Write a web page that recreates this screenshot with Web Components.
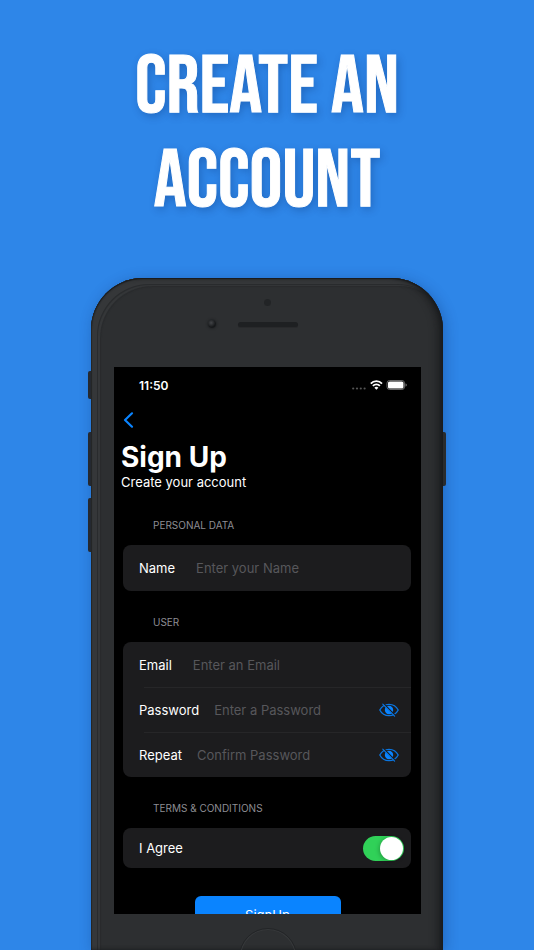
<!DOCTYPE html>
<html lang="en">
<head>
<meta charset="utf-8">
<meta name="viewport" content="width=device-width, initial-scale=1">
<title>Create an account</title>
<style>
  html, body {
    height: 100%;
    margin: 0;
  }
  body {
    background: #2e86e8;
    font-family: Inter, "Liberation Sans", sans-serif;
    color: #fff;
  }
</style>
</head>
<body>
<promo-page>
  <promo-title slot="title">Create an<br>account</promo-title>
  <phone-frame>
    <status-bar time="11:50"></status-bar>
    <page-header heading="Sign Up" subtitle="Create your account"></page-header>
    <form-section heading="Personal data">
      <form-field label="Name" placeholder="Enter your Name"></form-field>
    </form-section>
    <form-section heading="User">
      <form-field label="Email" type="email" placeholder="Enter an Email"></form-field>
      <form-field label="Password" type="password" placeholder="Enter a Password"></form-field>
      <form-field label="Repeat" type="password" placeholder="Confirm Password"></form-field>
    </form-section>
    <form-section heading="Terms &amp; Conditions">
      <toggle-field label="I Agree"></toggle-field>
    </form-section>
    <submit-button>SignUp</submit-button>
  </phone-frame>
</promo-page>

<script>
class BaseElement extends HTMLElement {
  constructor() {
    super();
    const template = document.createElement('template');
    template.innerHTML = this.render();
    this.attachShadow({mode: 'open'});
    this.shadowRoot.appendChild(template.content.cloneNode(true));
  }
}

class PromoPage extends BaseElement {
  render() {
    return `
      <style>
        :host {
          display: flex;
          flex-direction: column;
          height: 100vh;
          overflow: hidden;
        }
        header {
          flex: none;
          padding: 41px 16px 49px;
        }
        main {
          display: flex;
          flex: 1;
          min-height: 0;
          padding: 0 88px;
        }
      </style>
      <header><slot name="title"></slot></header>
      <main><slot></slot></main>
    `;
  }
}

class PromoTitle extends BaseElement {
  render() {
    return `
      <style>
        :host { display: block; }
        h1 {
          margin: 0;
          font: 82px/94px "Bebas Neue", "Liberation Sans Narrow", "Liberation Sans", sans-serif;
          text-align: center;
          text-transform: uppercase;
          text-shadow: 2px 3px 8px rgba(0, 30, 90, 0.3);
          -webkit-text-stroke: 1px #fff;
        }
      </style>
      <h1><slot></slot></h1>
    `;
  }
}

class PhoneFrame extends BaseElement {
  render() {
    return `
      <style>
        :host {
          display: flex;
          flex: 1;
          min-width: 0;
        }
        .keys {
          display: flex;
          flex-direction: column;
          gap: 12px;
          width: 3px;
          padding-top: 93px;
        }
        .keys i {
          height: 54px;
          background: #292b2d;
          border-radius: 2px 0 0 2px;
        }
        .keys .mute {
          height: 28px;
          margin-bottom: 21px;
        }
        .keys.right { padding-top: 154px; }
        .keys.right i { border-radius: 0 2px 2px 0; }
        .body {
          display: flex;
          flex-direction: column;
          flex: 1;
          min-width: 0;
          box-sizing: border-box;
          padding: 0 22px 0 23px;
          border-radius: 52px 52px 0 0;
          background: #2d2f31;
          box-shadow:
            inset 0 1px 1px #191b1d,
            inset -4px 0 4px #1b1d1f,
            inset 1px 0 1px #26282a,
            inset 6px 6px 0 #353739,
            inset 7px 7px 1px #292b2d,
            inset 9px 8px 1px #37393b,
            inset 10px 9px 1px #292b2d,
            inset -10px 0 4px #292b2d,
            2px 2px 14px rgba(0, 30, 90, 0.3);
        }
        .top {
          display: grid;
          grid-template-columns: 1fr 60px 1fr;
          align-content: start;
          align-items: center;
          justify-items: center;
          row-gap: 14px;
          box-sizing: border-box;
          flex: none;
          height: 89px;
          padding-top: 21px;
        }
        .sensor {
          grid-column: 2;
          width: 7px;
          height: 7px;
          border-radius: 50%;
          background: #222426;
        }
        .lens {
          grid-column: 1;
          justify-self: end;
          width: 8px;
          height: 8px;
          margin-right: 22px;
          border-radius: 50%;
          background: radial-gradient(circle at 40% 35%, #424447 0, #17191b 60%);
          box-shadow: 0 0 2px 1px #222426;
        }
        .speaker {
          width: 60px;
          height: 5px;
          border-radius: 3px;
          background: #1e2022;
          box-shadow: 0 1px 0 #28292b;
        }
        .screen {
          flex: 1;
          min-height: 0;
          overflow: hidden;
          background: #000;
        }
        .bottom {
          display: flex;
          justify-content: center;
          flex: none;
          box-sizing: border-box;
          height: 36px;
          padding-top: 14px;
          overflow: hidden;
        }
        .home {
          box-sizing: border-box;
          flex: none;
          width: 58px;
          height: 58px;
          border: 1px solid #232527;
          border-radius: 50%;
          box-shadow: inset 0 0 0 1px #37393b;
        }
      </style>
      <div class="keys"><i class="mute"></i><i></i><i></i></div>
      <div class="body">
        <div class="top">
          <div class="sensor"></div>
          <div class="lens"></div>
          <div class="speaker"></div>
        </div>
        <div class="screen"><slot></slot></div>
        <div class="bottom"><div class="home"></div></div>
      </div>
      <div class="keys right"><i></i></div>
    `;
  }
}

class StatusBar extends BaseElement {
  render() {
    return `
      <style>
        :host {
          display: flex;
          align-items: center;
          justify-content: space-between;
          height: 36px;
          padding: 0 14px 0 25px;
          font-size: 12px;
          font-weight: 600;
        }
        svg { display: block; }
      </style>
      <time>${this.getAttribute('time')}</time>
      <svg width="56" height="12" viewBox="0 0 56 12" fill="none">
        <g fill="#555">
          <circle cx="2.200" cy="9.5" r="1.1"/><circle cx="6" cy="9.5" r="1.1"/>
          <circle cx="9.8" cy="9.5" r="1.1"/><circle cx="13.6" cy="9.5" r="1.1"/>
        </g>
        <g stroke="#fff" stroke-width="1.8">
          <path d="M19.8 4.6a7.6 7.6 0 0 1 11.2 0"/>
          <path d="M21.9 6.9a4.7 4.7 0 0 1 7 0"/>
        </g>
        <path d="M25.4 10.8l-2-2.1a2.8 2.8 0 0 1 4 0z" fill="#fff"/>
        <rect x="36" y="1.5" width="17.500" height="9" rx="2.6" stroke="#666"/>
        <rect x="37" y="2.5" width="15.500" height="7" rx="1.6" fill="#fff"/>
        <path d="M54.500 4.300v3.400q1.300-.5 1.300-1.700t-1.300-1.700z" fill="#777"/>
      </svg>
    `;
  }
}

class PageHeader extends BaseElement {
  render() {
    return `
      <style>
        :host {
          display: block;
          padding: 8px 7px 4px;
        }
        button {
          display: block;
          margin: 0 0 10px;
          padding: 0 2px;
          border: 0;
          background: none;
        }
        svg { display: block; }
        h2 {
          margin: 0;
          font-size: 28px;
          font-weight: 700;
          line-height: 36px;
        }
        p {
          margin: 0;
          font-size: 13px;
          line-height: 15px;
        }
      </style>
      <button type="button" aria-label="Back">
        <svg width="11" height="18" viewBox="0 0 11 18" fill="none" stroke="#0a84ff" stroke-width="2.200" stroke-linecap="round" stroke-linejoin="round">
          <path d="M9 2.300L2 9l7 6.700"/>
        </svg>
      </button>
      <h2>${this.getAttribute('heading')}</h2>
      <p>${this.getAttribute('subtitle')}</p>
    `;
  }
}

class FormSection extends BaseElement {
  render() {
    return `
      <style>
        :host {
          display: block;
          padding: 23px 10px 0 9px;
        }
        h3 {
          margin: 0 0 12px;
          padding-left: 30px;
          font-size: 10px;
          font-weight: 400;
          line-height: 16px;
          color: #8d8d93;
          text-transform: uppercase;
        }
        .card {
          border-radius: 8px;
          background: #1c1c1e;
        }
      </style>
      <h3>${this.getAttribute('heading')}</h3>
      <div class="card"><slot></slot></div>
    `;
  }
}

class FormField extends BaseElement {
  render() {
    const type = this.getAttribute('type') || 'text';
    const secret = type === 'password';
    return `
      <style>
        :host {
          display: block;
          padding-left: 16px;
          font-size: 13px;
        }
        .row {
          display: flex;
          align-items: center;
          gap: ${secret ? 15 : 21}px;
          height: 45px;
          padding-right: 12px;
        }
        :host(:only-child) .row { height: 46px; }
        :host(:not(:first-child)) .row {
          background: linear-gradient(#262628, #262628) 5px 0 / 100% 1px no-repeat;
        }
        input {
          flex: 1;
          min-width: 0;
          padding: 0;
          border: 0;
          outline: 0;
          background: none;
          color: #fff;
          font: inherit;
        }
        input::placeholder {
          color: #57575b;
          opacity: 1;
        }
        button {
          padding: 0;
          border: 0;
          background: none;
        }
        svg { display: block; }
      </style>
      <div class="row">
        <label for="field">${this.getAttribute('label')}</label>
        <input id="field" type="${type}" placeholder="${this.getAttribute('placeholder')}">
        ${secret ? `
        <button type="button" aria-label="Show password">
          <svg width="20" height="14" viewBox="0 0 20 14" fill="none" stroke="#0a75e0" stroke-width="1.300">
            <path d="M.8 7C2.700 3.300 6 1.300 10 1.300S17.300 3.300 19.200 7C17.300 10.700 14 12.700 10 12.700S2.700 10.700.8 7z"/>
            <circle cx="10" cy="7" r="4.200" fill="#0a84ff" stroke="none"/>
            <path d="M4.800.8l11.600 12" stroke="#1c1c1e"/>
            <path d="M3.800 1.100l11.800 12" stroke-linecap="round" stroke-width="1.200"/>
          </svg>
        </button>` : ''}
      </div>
    `;
  }
}

class ToggleField extends BaseElement {
  render() {
    return `
      <style>
        :host {
          display: flex;
          align-items: center;
          justify-content: space-between;
          height: 40px;
          padding: 0 7px 0 16px;
          font-size: 13px;
        }
        input {
          appearance: none;
          display: flex;
          box-sizing: border-box;
          width: 41px;
          height: 25px;
          margin: 0;
          padding: 1px;
          border-radius: 13px;
          background: #39393d;
        }
        input::before {
          content: "";
          width: 23px;
          height: 23px;
          border-radius: 50%;
          background: #fff;
          box-shadow: -1px 1px 4px rgba(0, 0, 0, 0.25);
        }
        input:checked {
          justify-content: flex-end;
          background: #30d158;
        }
      </style>
      <label for="toggle">${this.getAttribute('label')}</label>
      <input id="toggle" type="checkbox" role="switch" checked>
    `;
  }
}

class SubmitButton extends BaseElement {
  render() {
    return `
      <style>
        :host {
          display: flex;
          justify-content: center;
          padding-top: 28px;
        }
        button {
          width: 146px;
          height: 38px;
          padding: 0;
          border: 0;
          border-radius: 6px;
          background: #0a84ff;
          color: #fff;
          font: inherit;
          font-size: 13px;
        }
      </style>
      <button type="submit"><slot></slot></button>
    `;
  }
}

customElements.define('promo-page', PromoPage);
customElements.define('promo-title', PromoTitle);
customElements.define('phone-frame', PhoneFrame);
customElements.define('status-bar', StatusBar);
customElements.define('page-header', PageHeader);
customElements.define('form-section', FormSection);
customElements.define('form-field', FormField);
customElements.define('toggle-field', ToggleField);
customElements.define('submit-button', SubmitButton);
</script>
</body>
</html>
